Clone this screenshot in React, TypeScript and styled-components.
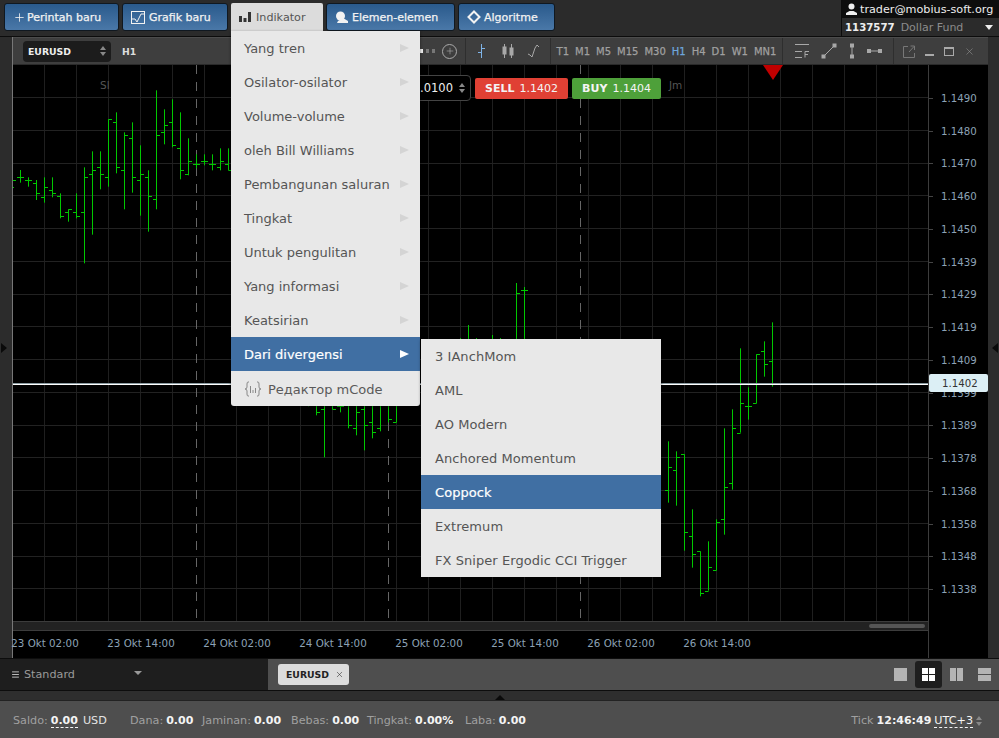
import React from 'react'
import styled, { createGlobalStyle } from 'styled-components'
import { Plus, X, Menu } from 'lucide-react'

const Global = createGlobalStyle`
html, body { margin: 0; padding: 0; background: #2a2a2a; }
body { font-family: "DejaVu Sans", Verdana, sans-serif; font-size: 12px; }
* { box-sizing: border-box; }
`

const Page = styled.div`
width: 999px;
height: 738px;
display: flex;
flex-direction: column;
overflow: hidden;
background: #2a2a2a;
`

const TopBar = styled.div`
height: 37px;
flex: none;
display: flex;
align-items: flex-start;
padding: 3px 0 0 4px;
gap: 3px;
background: #2b2b2b;
border-bottom: 1px solid #0c0c0c;
position: relative;
`

const NavButton = styled.div<{ $w: number; $gap: number }>`
width: ${p => p.$w}px;
height: 28px;
display: flex;
align-items: center;
gap: ${p => p.$gap}px;
padding-left: 8px;
border: 1px solid #101820;
border-radius: 3px;
background: linear-gradient(#2a5a8c, #4a78a8);
color: #f2f2f2;
font-size: 11px;
-webkit-text-stroke: 0.25px #f2f2f2;
`

const NavActive = styled.div`
width: 92px;
height: 28px;
display: flex;
align-items: center;
gap: 5px;
padding-left: 8px;
background: #dcdcdc;
color: #555;
font-size: 11.2px;
border-radius: 2px 2px 0 0;
position: relative;
`

const Dropdown = styled.div`
position: absolute;
left: 0;
top: 28px;
width: 189px;
background: #e8e8e8;
border-radius: 0 0 3px 3px;
box-shadow: 0 1px 3px rgba(0,0,0,.5);
z-index: 20;
`

const MenuRow = styled.div<{ $on?: boolean }>`
height: 34px;
display: flex;
align-items: center;
justify-content: space-between;
padding: 0 11px 0 13px;
font-size: 13px;
white-space: nowrap;
color: ${p => (p.$on ? '#fff' : '#555')};
background: ${p => (p.$on ? '#406fa3' : 'transparent')};
-webkit-text-stroke: ${p => (p.$on ? '0.2px #fff' : '0')};
`

const MenuArrow = styled.span<{ $on?: boolean }>`
width: 0;
height: 0;
border-left: 9px solid ${p => (p.$on ? '#fff' : '#d4d4d4')};
border-top: 4.5px solid transparent;
border-bottom: 4.5px solid transparent;
`

const EditorRow = styled(MenuRow)`
height: 35px;
padding-top: 1px;
justify-content: flex-start;
gap: 6px;
color: #5a5a5a;
`

const SubMenu = styled.div`
position: absolute;
left: 190px;
top: 308px;
width: 240px;
background: #e8e8e8;
box-shadow: 0 1px 3px rgba(0,0,0,.5);
`

const SubRow = styled(MenuRow)`
padding-left: 14px;
letter-spacing: 0.06px;
`

const Account = styled.div`
position: absolute;
right: 0;
top: 0;
width: 158px;
height: 36px;
background: #2b2b2b;
border-left: 1px solid #0c0c0c;
`

const AccountMail = styled.div`
height: 18px;
background: #0d0d0d;
display: flex;
align-items: center;
gap: 3px;
padding-left: 4px;
color: #eee;
font-size: 11.2px;
`

const AccountFund = styled.div`
height: 18px;
display: flex;
align-items: center;
padding: 0 6px 0 3px;
color: #8c8c8c;
font-size: 11px;
gap: 6px;
b { color: #eee; font-size: 10.2px; }
i { margin-left: auto; width: 0; height: 0; border-top: 5px solid #eee; border-left: 4px solid transparent; border-right: 4px solid transparent; }
`

const Workspace = styled.div`
flex: none;
height: 621px;
display: flex;
`

const Gutter = styled.div<{ $w: number; $left?: boolean }>`
width: ${p => p.$w}px;
flex: none;
background: #2c2c2c;
display: flex;
align-items: center;
justify-content: ${p => (p.$left ? 'flex-start' : 'flex-end')};
padding: 0 1px 0 1px;
i {
  width: 0; height: 0;
  border-top: 5px solid transparent;
  border-bottom: 5px solid transparent;
  ${p => (p.$left ? 'border-left: 6px solid #0a0a0a;' : 'border-right: 6px solid #0a0a0a;')}
}
`

const ChartWindow = styled.div`
flex: 1;
display: flex;
flex-direction: column;
border-left: 1px solid #777;
background: #000;
min-width: 0;
`

const Toolbar = styled.div`
height: 28px;
flex: none;
display: flex;
background: #3e3e3e;
border-top: 1px solid #4c4c4c;
border-bottom: 1px solid #2a2a2a;
`

const ToolSection = styled.div<{ $w: number; $gap?: number }>`
width: ${p => p.$w}px;
flex: none;
display: flex;
align-items: center;
justify-content: center;
gap: ${p => p.$gap ?? 0}px;
border-right: 1px solid #2e2e2e;
&:last-child { border-right: none; padding-right: 4px; }
`

const MainSection = styled(ToolSection)`
justify-content: flex-start;
padding-left: 10px;
`

const SymbolSelect = styled.div`
width: 88px;
height: 21px;
display: flex;
align-items: center;
justify-content: space-between;
padding: 0 5px;
background: #1c1c1c;
border-radius: 4px;
color: #eee;
font-size: 9.3px;
font-weight: bold;
`

const Frame = styled.span`
margin-left: 11px;
color: #ddd;
font-size: 9.3px;
font-weight: bold;
`

const ZoomDots = styled.div`
margin-left: auto;
display: flex;
align-items: center;
gap: 3px;
padding-right: 8px;
`

const Dot = styled.i<{ $dim?: boolean }>`
width: 3px;
height: 4px;
background: ${p => (p.$dim ? '#777' : '#eee')};
`

const PlusCircle = styled.span`
width: 15px;
height: 15px;
margin-left: 4px;
display: flex;
align-items: center;
justify-content: center;
border: 1px solid #aaa;
border-radius: 50%;
color: #aaa;
`

const Tf = styled.span<{ $on?: boolean }>`
color: ${p => (p.$on ? '#6ea6dc' : '#a0a0a0')};
font-size: 10px;
-webkit-text-stroke: 0.25px ${p => (p.$on ? '#6ea6dc' : '#a0a0a0')};
`

const ChartBody = styled.div`
flex: 1;
display: flex;
min-height: 0;
`

const PlotColumn = styled.div`
width: 915px;
flex: none;
display: flex;
flex-direction: column;
position: relative;
`

const PlotSvg = styled.svg`
display: block;
flex: none;
`

const ScrollTrack = styled.div`
height: 10px;
flex: none;
display: flex;
justify-content: flex-end;
align-items: center;
padding-right: 3px;
background: #222;
border-top: 1px solid #3c3c3c;
border-bottom: 1px solid #3c3c3c;
`

const ScrollThumb = styled.div`
width: 56px;
height: 4px;
border-radius: 2px;
background: #555;
`

const TimeAxis = styled.div`
flex: 1;
display: flex;
margin-left: -16px;
`

const TimeLabel = styled.div`
width: 96px;
flex: none;
padding-top: 6px;
text-align: center;
color: #8ca2b6;
font-size: 10.3px;
white-space: nowrap;
`

const PriceAxis = styled.div`
flex: 1;
position: relative;
padding-top: 17px;
border-left: 1px solid #3c3c3c;
`

const PriceRow = styled.div`
height: 32.75px;
display: flex;
align-items: center;
padding-left: 12px;
color: #8ca2b6;
font-size: 10.2px;
&::before {
  content: '';
  position: absolute;
  left: 0;
  width: 4px;
  height: 1px;
  background: #444;
}
`

const PriceTag = styled.div`
position: absolute;
left: 0;
right: 0;
top: 309px;
height: 18px;
display: flex;
align-items: center;
padding-left: 13px;
background: #dceff5;
border-radius: 2px;
color: #333;
font-size: 10.2px;
`

const OrderBar = styled.div`
position: absolute;
left: 398px;
top: 10px;
display: flex;
align-items: center;
gap: 4px;
`

const VolumeBox = styled.div`
width: 60px;
height: 26px;
display: flex;
align-items: center;
justify-content: flex-end;
gap: 6px;
padding-right: 5px;
border: 1px solid #444;
border-radius: 4px;
background: #000;
color: #eee;
font-size: 11.5px;
`

const TradeButton = styled.div<{ $w: number; $bg: string }>`
width: ${p => p.$w}px;
height: 21px;
display: flex;
align-items: center;
justify-content: center;
gap: 5px;
border-radius: 2px;
background: ${p => p.$bg};
color: #f4f4f4;
font-size: 11px;
b { font-size: 11px; }
`

const ChartHint = styled.span<{ $left: number }>`
position: absolute;
left: ${p => p.$left}px;
top: 14px;
color: #555;
font-size: 10.5px;
`

const TabsRow = styled.div`
height: 33px;
flex: none;
display: flex;
border-top: 1px solid #0d0d0d;
border-bottom: 1px solid #0d0d0d;
`

const WorkspacePicker = styled.div`
width: 268px;
flex: none;
display: flex;
align-items: center;
gap: 4px;
padding-left: 11px;
background: #1e1e1e;
color: #9a9a9a;
font-size: 11.2px;
svg { color: #c4c4c4; }
i { margin-left: 55px; margin-top: -3px; width: 0; height: 0; border-top: 4px solid #999; border-left: 4px solid transparent; border-right: 4px solid transparent; }
`

const TabsArea = styled.div`
flex: 1;
display: flex;
align-items: center;
justify-content: space-between;
padding: 0 1px 0 10px;
background: #4e4e4e;
`

const SymbolTab = styled.div`
width: 71px;
height: 21px;
display: flex;
align-items: center;
gap: 6px;
padding-left: 8px;
border-radius: 3px;
background: #dcdcdc;
color: #222;
font-size: 9.3px;
font-weight: bold;
svg { flex: none; }
`

const LayoutSet = styled.div`
display: flex;
align-items: center;
gap: 1px;
`

const LayoutButton = styled.div<{ $on?: boolean }>`
width: 27px;
height: 27px;
display: flex;
align-items: center;
justify-content: center;
border-radius: 3px;
background: ${p => (p.$on ? '#1e1e1e' : 'transparent')};
`

const Band = styled.div`
height: 10px;
flex: none;
display: flex;
justify-content: center;
align-items: flex-end;
background: #2e2e2e;
border-bottom: 1px solid #222;
i { width: 0; height: 0; border-bottom: 5px solid #0a0a0a; border-left: 5px solid transparent; border-right: 5px solid transparent; }
`

const StatusBar = styled.div`
flex: 1;
display: flex;
align-items: center;
padding: 2px 17px 0 13px;
background: #4e4e4e;
color: #a0a0a0;
font-size: 11.2px;
white-space: nowrap;
`

const Stat = styled.span<{ $w: number }>`
width: ${p => p.$w}px;
flex: none;
display: flex;
gap: 3px;
`

const Value = styled.b`
color: #f4f4f4;
font-size: 11px;
`

const Dotted = styled.span`
color: #f4f4f4;
border-bottom: 1px dashed #f4f4f4;
`

const Currency = styled.span`
margin-left: 2px;
color: #e4e4e4;
`

const Right = styled.div`
margin-left: auto;
display: flex;
align-items: center;
gap: 3px;
`

const Updown = styled.span`
display: inline-flex;
flex-direction: column;
gap: 2px;
i:first-child { width: 0; height: 0; border-bottom: 4px solid #888; border-left: 3.5px solid transparent; border-right: 3.5px solid transparent; }
i:last-child { width: 0; height: 0; border-top: 4px solid #888; border-left: 3.5px solid transparent; border-right: 3.5px solid transparent; }
`

type Bar = [number, number, number, number, number]

const fromTop = (rows: Bar[], base: number): Bar[] =>
  rows.map(([n, a, b, c, d]) => [n, base + a / 3, base + b / 3, base + c / 3, base + d / 3])

const bars: Bar[] = [
  ...fromTop([
    [0, 270, 308, 292, 292], [1, 292, 320, 300, 300], [2, 300, 360, 310, 340], [3, 292, 368, 350, 322],
    [4, 292, 352, 331, 340], [5, 340, 415, 349, 409], [6, 388, 425, 397, 388], [7, 340, 415, 397, 409],
    [8, 262, 550, 397, 292], [9, 214, 464, 283, 271], [10, 214, 328, 262, 283], [11, 118, 320, 292, 118],
    [12, 97, 280, 127, 262], [13, 157, 388, 271, 166], [14, 127, 338, 175, 292], [15, 196, 407, 301, 283],
    [16, 271, 455, 292, 349], [17, 31, 388, 358, 166], [18, 88, 193, 157, 136], [19, 58, 202, 127, 196],
    [20, 97, 298, 205, 271], [21, 175, 286, 283, 244], [22, 223, 265, 253, 253], [23, 223, 256, 244, 244],
    [24, 223, 271, 253, 253], [25, 205, 271, 262, 244], [26, 205, 271, 253, 271],
  ], 80),
  ...fromTop([
    [36, 0, 79, 60, 60], [37, 0, 106, 60, 97], [38, 0, 232, 88, 60], [39, 0, 88, 60, 88], [40, 0, 97, 79, 79],
    [41, 0, 145, 60, 136], [42, 0, 166, 145, 97], [43, 0, 211, 88, 136], [44, 0, 175, 127, 157],
    [45, 0, 154, 145, 60], [46, 0, 127, 60, 118], [47, 0, 127, 127, 60],
  ], 380),
  [55, 338, 345, 350, 350], [56, 325, 345, 350, 350], [57, 338, 345, 350, 350], [59, 335, 345, 350, 350],
  [60, 338, 345, 350, 350], [62, 283, 345, 350, 293], [63, 287, 345, 290, 290],
  ...fromTop([
    [81, 424, 608, 571, 502], [82, 454, 617, 511, 472], [83, 463, 752, 463, 697], [84, 628, 803, 707, 763],
    [85, 754, 889, 754, 880], [86, 724, 872, 872, 802], [87, 658, 811, 811, 667], [88, 385, 704, 658, 562],
    [89, 328, 569, 550, 385], [90, 145, 398, 398, 310], [91, 262, 359, 319, 319], [92, 163, 310, 310, 163],
    [93, 124, 230, 154, 193], [94, 67, 260, 184, 250],
  ], 300),
]

const vLines = Array.from({ length: 28 }, (_, i) => 44.5 + i * 32)
const hLines = Array.from({ length: 17 }, (_, i) => Math.round(97 + i * 32.75) + 0.5)
const crisp = (v: number) => Math.round(v) + 0.5

const PriceChart = () => (
  <PlotSvg width={915} height={556} viewBox="13 65 915 556">
    {vLines.map(x => <line key={x} x1={x} x2={x} y1={65} y2={621} stroke="#1f1f1f" />)}
    {hLines.map(y => <line key={y} x1={13} x2={928} y1={y} y2={y} stroke="#222" />)}
    {[196.5, 388.5, 580.5].map(x => (
      <line key={x} x1={x} x2={x} y1={65} y2={621} stroke="#666" strokeDasharray="9 8" />
    ))}
    {bars.map(([n, hi, lo, open, close]) => {
      const x = 20.5 + n * 8
      return (
        <g key={n} stroke="#00c800">
          <line x1={x} x2={x} y1={hi} y2={lo} />
          <line x1={x - 3.5} x2={x} y1={crisp(open)} y2={crisp(open)} />
          <line x1={x} x2={x + 3.5} y1={crisp(close)} y2={crisp(close)} />
        </g>
      )
    })}
    <line x1={13} x2={16} y1={180.5} y2={180.5} stroke="#00c800" />
    <line x1={13} x2={14} y1={187.5} y2={187.5} stroke="#00c800" />
    <line x1={13} x2={928} y1={383.5} y2={383.5} stroke="#8a9aa0" />
    <line x1={13} x2={928} y1={384.5} y2={384.5} stroke="#fff" />
    <polygon points="763,65 783,65 773,80" fill="#c00000" />
  </PlotSvg>
)

const navIcon = {
  chart: (
    <svg width="14" height="13" viewBox="0 0 14 13" fill="none" stroke="#f2f2f2">
      <rect x="0.5" y="0.5" width="13" height="12" />
      <path d="M1 8h3l2 3L10 3h3" />
    </svg>
  ),
  bars: (
    <svg width="12" height="10" viewBox="0 0 12 10" fill="#333">
      <rect x="0" y="4" width="3" height="6" /><rect x="4.5" y="6" width="3" height="4" /><rect x="9" y="0" width="3" height="10" />
    </svg>
  ),
  elements: (
    <svg width="14" height="13" viewBox="0 0 14 13" fill="#f2f2f2">
      <circle cx="5.500" cy="5" r="4.500" />
      <path d="M8 7l5 3v2H2l1-2z" />
    </svg>
  ),
  algo: (
    <svg width="14" height="14" viewBox="0 0 14 14" fill="none" stroke="#f2f2f2" strokeWidth="2">
      <path d="M7 1.500L12.500 7 7 12.500 1.500 7z" />
    </svg>
  ),
}

const Grid4 = ({ color, cols, rows }: { color: string; cols: number; rows: number }) => (
  <svg width="13" height="13" viewBox="0 0 13 13" fill={color}>
    {Array.from({ length: cols * rows }, (_, i) => {
      const cw = (13 - (cols - 1)) / cols
      const rh = (13 - (rows - 1)) / rows
      return <rect key={i} x={(i % cols) * (cw + 1)} y={Math.floor(i / cols) * (rh + 1)} width={cw} height={rh} />
    })}
  </svg>
)

const menuItems = ['Yang tren', 'Osilator-osilator', 'Volume-volume', 'oleh Bill Williams', 'Pembangunan saluran', 'Tingkat', 'Untuk pengulitan', 'Yang informasi', 'Keatsirian']
const subItems = ['3 IAnchMom', 'AML', 'AO Modern', 'Anchored Momentum', 'Coppock', 'Extremum', 'FX Sniper Ergodic CCI Trigger']
const frames = ['T1', 'M1', 'M5', 'M15', 'M30', 'H1', 'H4', 'D1', 'W1', 'MN1']
const prices = ['1.1490', '1.1480', '1.1470', '1.1460', '1.1450', '1.1439', '1.1429', '1.1419', '1.1409', '1.1399', '1.1389', '1.1378', '1.1368', '1.1358', '1.1348', '1.1338']
const times = ['23 Okt 02:00', '23 Okt 14:00', '24 Okt 02:00', '24 Okt 14:00', '25 Okt 02:00', '25 Okt 14:00', '26 Okt 02:00', '26 Okt 14:00']

const App: React.FC = () => {
  return (
    <Page>
      <Global />
      <TopBar>
        <NavButton $w={115} $gap={1}><Plus size={13} strokeWidth={1.5} />Perintah baru</NavButton>
        <NavButton $w={106} $gap={4}>{navIcon.chart}Grafik baru</NavButton>
        <NavActive>
          {navIcon.bars}Indikator
          <Dropdown>
            {menuItems.map(m => (
              <MenuRow key={m}>{m}<MenuArrow /></MenuRow>
            ))}
            <MenuRow $on>Dari divergensi<MenuArrow $on /></MenuRow>
            <EditorRow>
              <svg width="18" height="16" viewBox="0 0 18 16" fill="none" stroke="#888">
                <path d="M5 1H4Q3 1 3 3v3Q3 8 1 8q2 0 2 2v3q0 2 1 2h1M13 1h1q1 0 1 2v3q0 2 2 2-2 0-2 2v3q0 2-1 2h-1M6.500 5v7M9 9v3M11.500 7v5" />
              </svg>
              Редактор mCode
            </EditorRow>
            <SubMenu>
              {subItems.map(s => (
                <SubRow key={s} $on={s === 'Coppock'}>{s}</SubRow>
              ))}
            </SubMenu>
          </Dropdown>
        </NavActive>
        <NavButton $w={129} $gap={3}>{navIcon.elements}Elemen-elemen</NavButton>
        <NavButton $w={97} $gap={3}>{navIcon.algo}Algoritme</NavButton>
        <Account>
          <AccountMail>
            <svg width="11" height="12" viewBox="0 0 11 12" fill="#eee">
              <circle cx="5.500" cy="3.500" r="3" /><path d="M0 12v-2l3.500-2h4L11 10v2z" />
            </svg>
            trader@mobius-soft.org
          </AccountMail>
          <AccountFund><b>1137577</b>Dollar Fund<i /></AccountFund>
        </Account>
      </TopBar>

      <Workspace>
        <Gutter $w={12} $left><i /></Gutter>
        <ChartWindow>
          <Toolbar>
            <MainSection $w={453}>
              <SymbolSelect>EURUSD<Updown><i /><i /></Updown></SymbolSelect>
              <Frame>H1</Frame>
              <ZoomDots>
                <Dot /><Dot /><Dot $dim /><Dot $dim />
                <PlusCircle><Plus size={10} strokeWidth={1.5} /></PlusCircle>
              </ZoomDots>
            </MainSection>
            <ToolSection $w={85} $gap={12}>
              <svg width="14" height="16" viewBox="0 0 14 16" fill="none" stroke="#7fb4e8"><path d="M6.500 1v14M3 9.500h3.500M6.500 5.500H10" /></svg>
              <svg width="14" height="16" viewBox="0 0 14 16" fill="none" stroke="#a8a8a8"><path d="M3.500 1v14M10.500 1v14" /><rect x="2" y="4" width="3" height="7" fill="#a8a8a8" /><rect x="9" y="5" width="3" height="7" fill="#a8a8a8" /></svg>
              <svg width="14" height="16" viewBox="0 0 14 16" fill="none" stroke="#a8a8a8"><path d="M1 11l2 1 2 2 3-9 2-3 2 2" /></svg>
            </ToolSection>
            <ToolSection $w={232} $gap={6}>
              {frames.map(f => <Tf key={f} $on={f === 'H1'}>{f}</Tf>)}
            </ToolSection>
            <ToolSection $w={111} $gap={11}>
              <svg width="15" height="16" viewBox="0 0 15 16" fill="none" stroke="#a8a8a8"><path d="M0 1.500h14M0 8.500h7M0 14.500h7" /><path d="M10 14.500V8.500h4M10 11.500h3" /></svg>
              <svg width="16" height="16" viewBox="0 0 16 16" fill="#a8a8a8" stroke="#a8a8a8"><path d="M3 13L13 3" /><rect x="1" y="12" width="3" height="3" /><rect x="12" y="1" width="3" height="3" /></svg>
              <svg width="8" height="16" viewBox="0 0 8 16" fill="#a8a8a8" stroke="#a8a8a8"><path d="M4 2v12" /><rect x="2.500" y="1" width="3" height="3" /><rect x="2.500" y="12" width="3" height="3" /></svg>
              <svg width="15" height="8" viewBox="0 0 15 8" fill="#a8a8a8" stroke="#a8a8a8"><path d="M2 4h12" /><rect x="0.500" y="2.500" width="3" height="3" /><rect x="11.500" y="2.500" width="3" height="3" /></svg>
            </ToolSection>
            <ToolSection $w={94} $gap={10}>
              <svg width="12" height="13" viewBox="0 0 12 13" fill="none" stroke="#777"><path d="M5 1.500H.5v11h11V8M6 7l5-5.500M7.500 1h4v4" /></svg>
              <svg width="9" height="13" viewBox="0 0 9 13" fill="#aaa"><rect y="9" width="9" height="2" /></svg>
              <svg width="10" height="13" viewBox="0 0 10 13" fill="none" stroke="#aaa"><rect x="0.500" y="2.500" width="9" height="8" /><path d="M0 3.500h10" /></svg>
              <X size={11} color="#999" strokeWidth={1.2} />
            </ToolSection>
          </Toolbar>
          <ChartBody>
            <PlotColumn>
              <PriceChart />
              <ChartHint $left={87}>Sl</ChartHint>
              <ChartHint $left={656}>Jm</ChartHint>
              <OrderBar>
                <VolumeBox>.0100<Updown><i /><i /></Updown></VolumeBox>
                <TradeButton $w={93} $bg="#e04034"><b>SELL</b>1.1402</TradeButton>
                <TradeButton $w={89} $bg="#4ea03a"><b>BUY</b>1.1404</TradeButton>
              </OrderBar>
              <ScrollTrack><ScrollThumb /></ScrollTrack>
              <TimeAxis>
                {times.map(t => <TimeLabel key={t}>{t}</TimeLabel>)}
              </TimeAxis>
            </PlotColumn>
            <PriceAxis>
              {prices.map(p => <PriceRow key={p}>{p}</PriceRow>)}
              <PriceTag>1.1402</PriceTag>
            </PriceAxis>
          </ChartBody>
        </ChartWindow>
        <Gutter $w={11}><i /></Gutter>
      </Workspace>

      <TabsRow>
        <WorkspacePicker><Menu size={9} strokeWidth={2.5} />Standard<i /></WorkspacePicker>
        <TabsArea>
          <SymbolTab>EURUSD<X size={9} strokeWidth={1.4} /></SymbolTab>
          <LayoutSet>
            <LayoutButton><Grid4 color="#b4b4b4" cols={1} rows={1} /></LayoutButton>
            <LayoutButton $on><Grid4 color="#fff" cols={2} rows={2} /></LayoutButton>
            <LayoutButton><Grid4 color="#b4b4b4" cols={2} rows={1} /></LayoutButton>
            <LayoutButton><Grid4 color="#b4b4b4" cols={1} rows={2} /></LayoutButton>
          </LayoutSet>
        </TabsArea>
      </TabsRow>
      <Band><i /></Band>
      <StatusBar>
        <Stat $w={117}>Saldo: <Value><Dotted>0.00</Dotted></Value><Currency>USD</Currency></Stat>
        <Stat $w={72}>Dana: <Value>0.00</Value></Stat>
        <Stat $w={89}>Jaminan: <Value>0.00</Value></Stat>
        <Stat $w={76}>Bebas: <Value>0.00</Value></Stat>
        <Stat $w={98}>Tingkat: <Value>0.00%</Value></Stat>
        <Stat $w={70}>Laba: <Value>0.00</Value></Stat>
        <Right>
          Tick <Value>12:46:49</Value> <Dotted>UTC+3</Dotted><Updown><i /><i /></Updown>
        </Right>
      </StatusBar>
    </Page>
  )
}

export default App
